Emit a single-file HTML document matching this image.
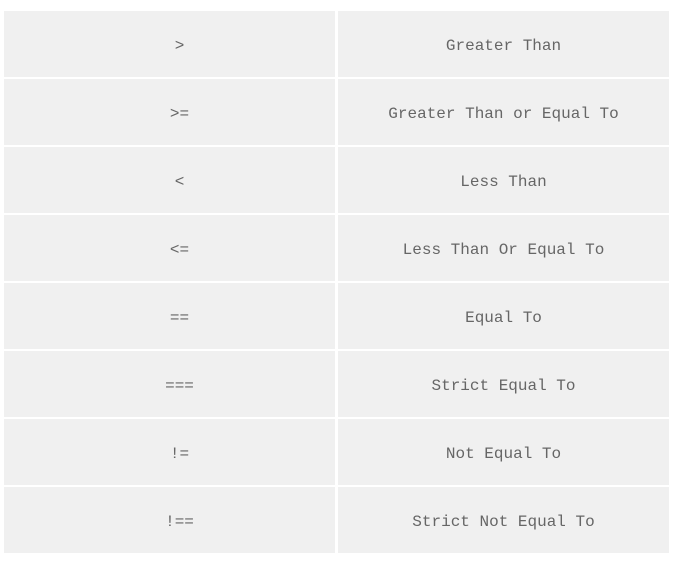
<!DOCTYPE html>
<html><head><style>
body{margin:0;background:#fff;width:674px;height:564px;overflow:hidden}
.t{position:absolute;left:4px;top:11px}
.r{display:flex;height:66px;margin-bottom:2px}
.c{background:#f0f0f0;display:flex;align-items:center;justify-content:center;font-family:"Liberation Mono",monospace;font-size:16px;color:#666;box-sizing:border-box;padding-top:4px}
.a{width:331px;margin-right:3px;padding-left:20px}
.b{width:331px}
</style></head><body>
<div class="t">
<div class="r"><div class="c a">&gt;</div><div class="c b">Greater Than</div></div>
<div class="r"><div class="c a">&gt;=</div><div class="c b">Greater Than or Equal To</div></div>
<div class="r"><div class="c a">&lt;</div><div class="c b">Less Than</div></div>
<div class="r"><div class="c a">&lt;=</div><div class="c b">Less Than Or Equal To</div></div>
<div class="r"><div class="c a">==</div><div class="c b">Equal To</div></div>
<div class="r"><div class="c a">===</div><div class="c b">Strict Equal To</div></div>
<div class="r"><div class="c a">!=</div><div class="c b">Not Equal To</div></div>
<div class="r"><div class="c a">!==</div><div class="c b">Strict Not Equal To</div></div>
</div>
</body></html>
